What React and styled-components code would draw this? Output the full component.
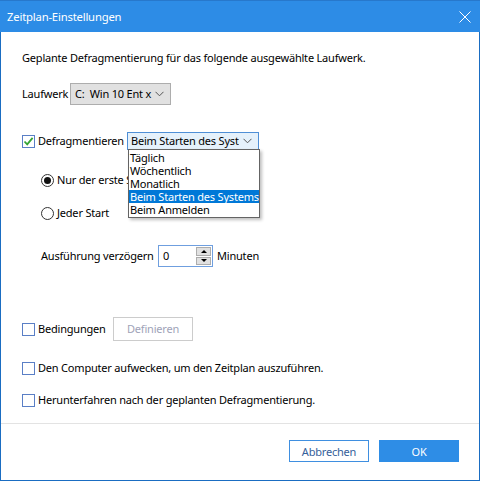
import React from "react";
import styled, { createGlobalStyle } from "styled-components";

const Global = createGlobalStyle`
  html, body { margin: 0; padding: 0; background: #fff; }
  body {
    font-family: "Noto Sans", "Open Sans", sans-serif;
    font-size: 11px;
    letter-spacing: -0.2px;
    color: #000;
  }
  * { box-sizing: border-box; }
`;

const Window = styled.div`
  width: 480px;
  height: 481px;
  border: 1px solid #1a6dc2;
  border-top: none;
  display: flex;
  flex-direction: column;
  background: #fff;
`;

const TitleBar = styled.div`
  height: 32px;
  margin: 0 -1px;
  background: #2d8ce6;
  color: #fff;
  display: flex;
  align-items: center;
  justify-content: space-between;
  padding: 0 9px 0 7px;
  font-size: 11.3px;
  border-top: 1px solid #2778cc;
`;

const Close = styled.svg`
  width: 12px;
  height: 12px;
`;

const Content = styled.div`
  flex: 1;
  padding: 18px 0 0 21px;
  display: flex;
  flex-direction: column;
  align-items: flex-start;
`;

const Row = styled.div`
  display: flex;
  align-items: center;
  height: ${(p) => p.$h || 16}px;
  margin-top: ${(p) => p.$top || 0}px;
  margin-left: ${(p) => p.$indent || 0}px;
  position: relative;
  line-height: 16px;
`;

const Text = styled.span`
  white-space: nowrap;
  flex-shrink: 0;
  ${(p) => (p.$w ? `width: ${p.$w}px;` : "")}
`;

const Select = styled.div`
  width: 101px;
  height: 22px;
  background: #e1e1e1;
  border: 1px solid #adadad;
  display: flex;
  align-items: center;
  justify-content: space-between;
  padding: 0 6px 0 4px;
  white-space: pre;
`;

const Combo = styled.div`
  width: 132px;
  height: 18px;
  background: #e5f1fb;
  border: 1px solid #4f8fd6;
  display: flex;
  align-items: center;
  justify-content: space-between;
  padding: 0 6px 0 3px;
  overflow: hidden;
  white-space: nowrap;
  position: relative;
`;

const ComboText = styled.span`
  overflow: hidden;
  width: 108px;
`;

const Chevron = styled.svg`
  width: 9px;
  height: 6px;
  flex-shrink: 0;
`;

const ListBox = styled.div`
  position: absolute;
  left: 106px;
  top: 17px;
  width: 132px;
  background: #fff;
  border: 1px solid #646464;
  box-shadow: 2px 2px 3px rgba(0, 0, 0, 0.25);
  padding: 1px 0;
  z-index: 5;
`;

const ListItem = styled.div`
  height: 13px;
  line-height: 13px;
  padding-left: 1px;
  white-space: nowrap;
  background: ${(p) => (p.$active ? "#0078d7" : "transparent")};
  color: ${(p) => (p.$active ? "#fff" : "#000")};
`;

const Check = styled.span`
  width: 13px;
  height: 13px;
  border: 1px solid #5a7fc6;
  background: #fff;
  margin-right: 3px;
  display: inline-flex;
  align-items: center;
  justify-content: center;
  flex-shrink: 0;
`;

const Radio = styled.span`
  width: 13px;
  height: 13px;
  border-radius: 50%;
  border: 1px solid #333;
  background: #fff;
  margin-right: 3px;
  display: inline-flex;
  align-items: center;
  justify-content: center;
  flex-shrink: 0;
  &::after {
    content: "";
    width: 7px;
    height: 7px;
    border-radius: 50%;
    background: ${(p) => (p.$on ? "#111" : "transparent")};
  }
`;

const Spin = styled.div`
  width: 55px;
  height: 22px;
  border: 1px solid #6f9fdf;
  display: flex;
  align-items: center;
  justify-content: space-between;
  padding: 1px 1px 1px 4px;
  margin-right: 4px;
`;

const SpinButtons = styled.div`
  display: flex;
  flex-direction: column;
  gap: 1px;
  height: 100%;
`;

const SpinButton = styled.div`
  width: 15px;
  flex: 1;
  background: #e1e1e1;
  border: 1px solid #adadad;
  display: flex;
  align-items: center;
  justify-content: center;
  &::after {
    content: "";
    border-left: 3px solid transparent;
    border-right: 3px solid transparent;
    ${(p) =>
      p.$up ? "border-bottom: 3px solid #000;" : "border-top: 3px solid #000;"}
  }
`;

const Button = styled.button`
  width: 80px;
  height: ${(p) => p.$h || 22}px;
  font: inherit;
  letter-spacing: inherit;
  border: 1px solid ${(p) => p.$border};
  background: ${(p) => p.$bg};
  color: ${(p) => p.$color};
  padding: 0;
  cursor: default;
`;

const Footer = styled.div`
  border-top: 1px solid #e3e3e3;
  height: 57px;
  display: flex;
  justify-content: flex-end;
  align-items: flex-start;
  gap: 10px;
  padding: 16px 20px 0 0;
`;

const CheckMark = () => (
  <svg width="11" height="11" viewBox="0 0 11 11">
    <path d="M1.5 5.5 L4.2 8.3 L9.6 1.8" fill="none" stroke="#36a436" strokeWidth="1.8" />
  </svg>
);

const Down = () => (
  <Chevron viewBox="0 0 9 6">
    <path d="M0.5 0.8 L4.5 4.8 L8.5 0.8" fill="none" stroke="#555" strokeWidth="1" />
  </Chevron>
);

export default function App() {
  const options = [
    "Täglich",
    "Wöchentlich",
    "Monatlich",
    "Beim Starten des Systems",
    "Beim Anmelden",
  ];
  return (
    <>
      <Global />
      <Window>
        <TitleBar>
          <span>Zeitplan-Einstellungen</span>
          <Close viewBox="0 0 12 12">
            <path d="M0.5 0.5 L11.5 11.5 M11.5 0.5 L0.5 11.5" stroke="#fff" strokeWidth="1" />
          </Close>
        </TitleBar>
        <Content>
          <Row>
            <Text>Geplante Defragmentierung für das folgende ausgewählte Laufwerk.</Text>
          </Row>
          <Row $top={17} $h={22}>
            <Text $w={48}>Laufwerk</Text>
            <Select>
              <span>C:  Win 10 Ent x</span>
              <Down />
            </Select>
          </Row>
          <Row $top={27} $h={18}>
            <Check>
              <CheckMark />
            </Check>
            <Text $w={89}>Defragmentieren</Text>
            <Combo>
              <ComboText>Beim Starten des Systems</ComboText>
              <Down />
            </Combo>
            <ListBox>
              {options.map((o, i) => (
                <ListItem key={o} $active={i === 3}>
                  {o}
                </ListItem>
              ))}
            </ListBox>
          </Row>
          <Row $top={22} $indent={19}>
            <Radio $on />
            <Text>Nur der erste Start</Text>
          </Row>
          <Row $top={17} $indent={19}>
            <Radio />
            <Text>Jeder Start</Text>
          </Row>
          <Row $top={24} $indent={19} $h={22}>
            <Text $w={117}>Ausführung verzögern</Text>
            <Spin>
              <span>0</span>
              <SpinButtons>
                <SpinButton $up />
                <SpinButton />
              </SpinButtons>
            </Spin>
            <Text>Minuten</Text>
          </Row>
          <Row $top={50} $h={24}>
            <Check />
            <Text $w={75}>Bedingungen</Text>
            <Button $border="#cccccc" $bg="#fff" $color="#a0a3b8" $h={24}>
              Definieren
            </Button>
          </Row>
          <Row $top={19}>
            <Check />
            <Text>Den Computer aufwecken, um den Zeitplan auszuführen.</Text>
          </Row>
          <Row $top={16}>
            <Check />
            <Text>Herunterfahren nach der geplanten Defragmentierung.</Text>
          </Row>
        </Content>
        <Footer>
          <Button $border="#3f8fe0" $bg="#fff" $color="#35609a">
            Abbrechen
          </Button>
          <Button $border="#2e8de6" $bg="#2e8de6" $color="#fff">
            OK
          </Button>
        </Footer>
      </Window>
    </>
  );
}
